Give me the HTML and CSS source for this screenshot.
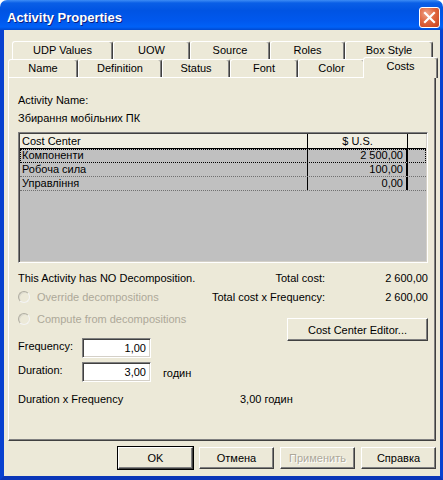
FILE: index.html
```html
<!DOCTYPE html>
<html>
<head>
<meta charset="utf-8">
<link rel="stylesheet" href="styles.css">
</head>
<body>
<div class="window">
  <div class="titlebar">
    <span class="title">Activity Properties</span>
    <span class="close"><svg width="13" height="13" viewBox="0 0 13 13"><path d="M2 2 L11 11 M11 2 L2 11" stroke="#fff" stroke-width="2.2" stroke-linecap="square"/></svg></span>
  </div>
  <div class="frame">
    <div class="tabrow back">
      <div class="tab t-udp">UDP Values</div>
      <div class="tab t-uow">UOW</div>
      <div class="tab t-src">Source</div>
      <div class="tab t-roles">Roles</div>
      <div class="tab t-box">Box Style</div>
    </div>
    <div class="tabrow front">
      <div class="tab t-name">Name</div>
      <div class="tab t-def">Definition</div>
      <div class="tab t-status">Status</div>
      <div class="tab t-font">Font</div>
      <div class="tab t-color">Color</div>
      <div class="tab t-costs sel">Costs</div>
    </div>
    <div class="panel">
      <div class="lbl">Activity Name:</div>
      <div class="lbl name">Збирання мобільних ПК</div>
      <div class="grid">
        <div class="ghead">
          <div class="c1">Cost Center</div>
          <div class="c2 center">$ U.S.</div>
          <div class="c3"></div>
        </div>
        <div class="grow focus">
          <div class="c1">Компоненти</div>
          <div class="c2">2 500,00</div>
          <div class="c3"></div>
        </div>
        <div class="grow">
          <div class="c1">Робоча сила</div>
          <div class="c2">100,00</div>
          <div class="c3"></div>
        </div>
        <div class="grow">
          <div class="c1">Управління</div>
          <div class="c2">0,00</div>
          <div class="c3"></div>
        </div>
      </div>
      <div class="sum">
        <div class="left">
          <div class="line">This Activity has NO Decomposition.</div>
          <div class="line radio-line r1"><span class="radio"></span><span class="dis">Override decompositions</span></div>
          <div class="line radio-line r2"><span class="radio"></span><span class="dis">Compute from decompositions</span></div>
          <div class="field f1"><span class="flabel">Frequency:</span><span class="input">1,00</span></div>
          <div class="field f2"><span class="flabel">Duration:</span><span class="input">3,00</span><span class="unit">годин</span></div>
        </div>
        <div class="right">
          <div class="line total"><span class="tlabel">Total cost:</span><span class="tval">2 600,00</span></div>
          <div class="line total t2"><span class="tlabel">Total cost x Frequency:</span><span class="tval">2 600,00</span></div>
          <div class="btn editor">Cost Center Editor...</div>
        </div>
      </div>
      <div class="line dxf"><span class="dxl">Duration x Frequency</span><span>3,00 годин</span></div>
    </div>
    <div class="btns">
      <div class="btn dlg default">OK</div>
      <div class="btn dlg">Отмена</div>
      <div class="btn dlg disabled">Применить</div>
      <div class="btn dlg">Справка</div>
    </div>
  </div>
</div>
</body>
</html>
```
FILE: styles.css
```css
* { box-sizing: border-box; }
html, body { margin: 0; padding: 0; background: #fff; }
body {
  width: 443px; height: 480px; overflow: hidden;
  font-family: "Liberation Sans", Arial, sans-serif;
  font-size: 11px; color: #000;
}
.window { width: 443px; height: 480px; display: flex; flex-direction: column; }
.titlebar {
  height: 30px; flex: none;
  border-radius: 7px 7px 0 0;
  background: linear-gradient(to bottom, #3d8cf5 0%, #0a5fe6 10%, #0054e3 35%, #0058ee 70%, #0061f7 90%, #0049d0 100%);
  display: flex; align-items: center; justify-content: space-between;
  padding: 5px 3px 0 7px;
}
.title {
  color: #fff; font-weight: bold; font-size: 13px;
  text-shadow: 1px 1px 0 #0a1e80;
}
.close {
  width: 21px; height: 21px; border: 1px solid #fff; border-radius: 3px;
  background: radial-gradient(circle at 35% 30%, #f0a48a 0%, #e0673f 45%, #c8401c 100%);
  display: flex; align-items: center; justify-content: center;
  margin-bottom: 1px;
}
.frame {
  flex: 1; background: #ece9d8;
  border-left: 4px solid #0841d0; border-right: 3px solid #0841d0; border-bottom: 4px solid #0a36b8;
  padding: 11px 4px 0 4px;
  display: flex; flex-direction: column;
}
.tabrow { display: flex; height: 18px; }
.tabrow.back { margin-left: 4px; }
.tab {
  height: 18px; background: #ece9d8;
  border-top: 1px solid #fff; border-left: 1px solid #fff; border-right: 1px solid #404040;
  box-shadow: inset -1px 0 #808080;
  border-radius: 3px 3px 0 0;
  text-align: center; line-height: 17px;
}
.t-udp { width: 101px; } .t-uow { width: 77px; } .t-src { width: 80px; } .t-roles { width: 75px; } .t-box { width: 88px; }
.t-name { width: 70px; } .t-def { width: 84px; } .t-status { width: 68px; } .t-font { width: 68px; } .t-color { width: 67px; }
.t-costs { width: 71px; }
.tab.sel {
  width: 75px; height: 21px; margin: -2px -2px 0 -2px;
  position: relative; z-index: 2; line-height: 17px;
}
.panel {
  height: 364px; flex: none;
  border-top: 1px solid #fff; border-left: 1px solid #fff;
  border-right: 1px solid #404040; border-bottom: 1px solid #404040;
  box-shadow: inset -1px -1px #808080;
  padding: 15px 7px 0 9px;
  position: relative; z-index: 1;
}
.lbl { height: 14px; line-height: 14px; }
.lbl.name { margin-top: 4px; }
.grid {
  margin-top: 7px; width: 410px; height: 131px;
  background: #c0c0c0;
  border: 1px solid; border-color: #808080 #fff #fff #808080;
  box-shadow: inset 1px 1px #404040, inset -1px -1px #d4d0c8;
  padding: 1px;
}
.ghead, .grow { display: flex; }
.ghead { height: 15px; background: #f1efe2; border-bottom: 1px solid #000; line-height: 14px; }
.grow { height: 14px; border-bottom: 1px dotted #707070; line-height: 13px; }
.c1 { width: 288px; padding-left: 2px; border-right: 1px solid #000; white-space: nowrap; }
.c2 { width: 100px; text-align: right; padding-right: 3px; border-right: 2px solid #000; }
.ghead .c2 { border-right-width: 1px; }
.c2.center { text-align: center; padding-right: 0; }
.c3 { flex: 1; }
.grow.focus { outline: 1px dotted #000; outline-offset: -1px; }
.sum { display: flex; margin-top: 8px; }
.left { width: 190px; display: flex; flex-direction: column; }
.right { flex: 1; display: flex; flex-direction: column; }
.line { height: 14px; line-height: 14px; white-space: nowrap; }
.radio-line { display: flex; align-items: center; }
.r1 { margin-top: 5px; }
.r2 { margin-top: 8px; }
.radio {
  width: 12px; height: 12px; border-radius: 50%;
  border: 1px solid; border-color: #b0aea2 #f4f4f4 #f4f4f4 #b0aea2;
  box-shadow: inset 1px 1px #dcdace;
  margin-right: 7px; flex: none;
}
.dis { color: #aca899; }
.field { display: flex; align-items: flex-start; height: 20px; }
.f1 { margin-top: 12px; }
.f2 { margin-top: 4px; }
.flabel { width: 64px; line-height: 16px; }
.input {
  width: 69px; height: 20px; background: #fff;
  border: 1px solid; border-color: #808080 #fff #fff #808080;
  box-shadow: inset 1px 1px #404040, inset -1px -1px #d4d0c8;
  text-align: right; padding-right: 4px; line-height: 18px;
}
.unit { margin-left: 12px; line-height: 22px; }
.total { display: flex; }
.tlabel { width: 117px; text-align: right; }
.tval { flex: 1; text-align: right; }
.t2 { margin-top: 5px; }
.btn {
  background: #ece9d8;
  border: 1px solid; border-color: #fff #404040 #404040 #fff;
  box-shadow: inset -1px -1px #808080;
  display: flex; align-items: center; justify-content: center;
}
.editor { width: 141px; height: 23px; margin-top: 14px; margin-left: auto; }
.dxf { margin-top: 10px; display: flex; }
.dxl { width: 222px; }
.btns { display: flex; justify-content: flex-end; gap: 6px; margin-top: 6px; }
.dlg { width: 75px; height: 22px; }
.dlg.default { outline: 1px solid #000; outline-offset: 0; border-color: #fff #404040 #404040 #fff; }
.dlg.disabled { color: #aca899; text-shadow: 1px 1px 0 #fff; }
```
